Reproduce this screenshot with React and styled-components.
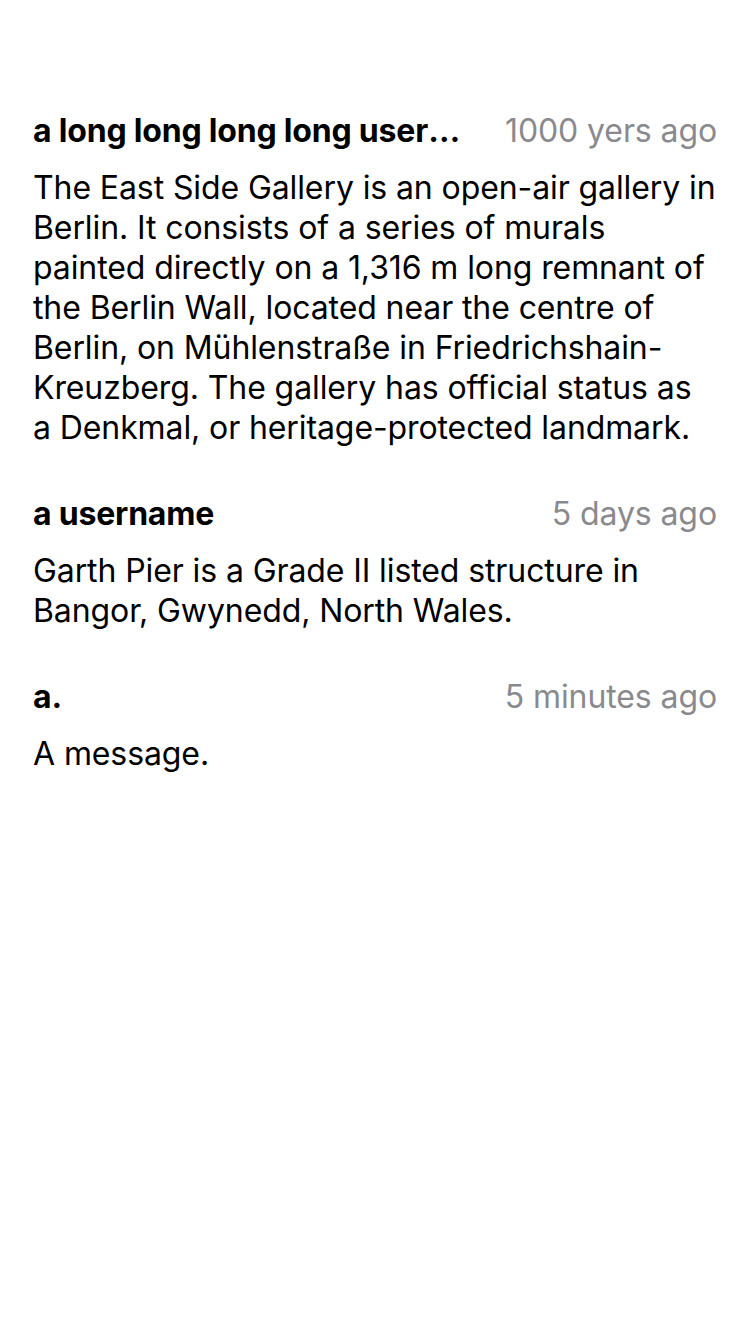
import React from 'react';
import styled, { createGlobalStyle } from 'styled-components';

const comments = [
  {
    user: 'a long long long long username that goes on',
    time: '1000 yers ago',
    text:
      'The East Side Gallery is an open-air gallery in Berlin. It consists of a series of murals painted directly on a 1,316 m long remnant of the Berlin Wall, located near the centre of Berlin, on Mühlenstraße in Friedrichshain-Kreuzberg. The gallery has official status as a Denkmal, or heritage-protected landmark.',
  },
  {
    user: 'a username',
    time: '5 days ago',
    text: 'Garth Pier is a Grade II listed structure in Bangor, Gwynedd, North Wales.',
  },
  {
    user: 'a.',
    time: '5 minutes ago',
    text: 'A message.',
  },
];

function App() {
  return (
    <>
      <GlobalStyle />
      <Page>
        {comments.map((c, i) => (
          <Comment key={i}>
            <Header>
              <User>{c.user}</User>
              <Time>{c.time}</Time>
            </Header>
            <Body>{c.text}</Body>
          </Comment>
        ))}
      </Page>
    </>
  );
}

//////// style ////////

const GlobalStyle = createGlobalStyle`
  body {
    margin: 0;
    background: #fff;
    font-family: Inter, "Noto Sans", "Liberation Sans", sans-serif;
    color: #000;
  }
`;

const Page = styled.div`
  width: 750px;
  min-height: 1334px;
  box-sizing: border-box;
  padding: 108px 33px 0;
  display: flex;
  flex-direction: column;
  gap: 43px;
`;

const Comment = styled.div`
  display: flex;
  flex-direction: column;
  gap: 16px;
`;

const Header = styled.div`
  display: flex;
  align-items: center;
  height: 44px;
`;

const User = styled.div`
  flex: 1;
  min-width: 0;
  font-size: 32px;
  font-weight: 700;
  letter-spacing: -0.2px;
  white-space: nowrap;
  overflow: hidden;
  text-overflow: ellipsis;
`;

const Time = styled.div`
  margin-left: 28px;
  flex-shrink: 0;
  font-size: 32px;
  letter-spacing: -0.1px;
  color: #8a8a8e;
  white-space: nowrap;
`;

const Body = styled.p`
  margin: 0;
  font-size: 32px;
  line-height: 40px;
  letter-spacing: -0.1px;
`;

export default App;
